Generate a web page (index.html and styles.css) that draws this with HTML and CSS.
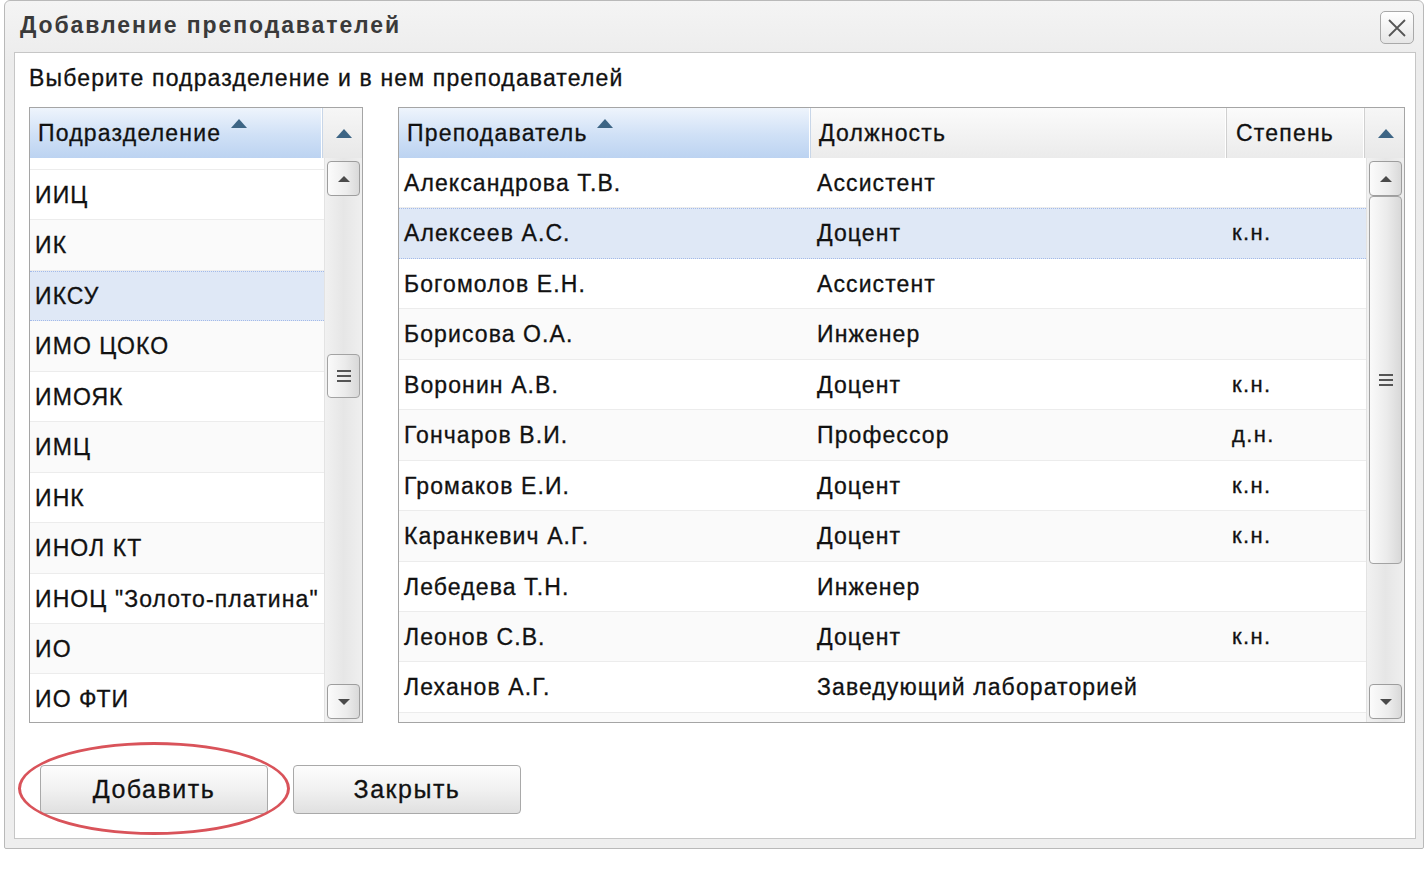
FILE: index.html
```html
<!DOCTYPE html>
<html lang="ru">
<head>
<meta charset="utf-8">
<title>Добавление преподавателей</title>
<link rel="stylesheet" href="styles.css">
</head>
<body>
<div class="page">
  <div class="window">
    <div class="titlebar">
      <span class="title">Добавление преподавателей</span>
      <button class="close" type="button" aria-label="Закрыть">
        <svg width="22" height="22" viewBox="0 0 22 22"><path d="M3 3 L19 19 M19 3 L3 19" stroke="#555" stroke-width="1.8" fill="none"/></svg>
      </button>
    </div>
    <div class="content">
      <div class="prompt">Выберите подразделение и в нем преподавателей</div>
      <div class="grids">
        <div class="grid grid-left">
          <div class="ghead">
            <div class="hcell sorted col-dept">Подразделение <span class="sort-arrow"></span></div>
            <div class="hscroll"><span class="hs-arrow"></span></div>
          </div>
          <div class="gbody">
            <div class="rows">
              <div class="row partial"></div>
              <div class="row"><div class="cell col-dept">ИИЦ</div></div>
              <div class="row alt"><div class="cell col-dept">ИК</div></div>
              <div class="row selected"><div class="cell col-dept">ИКСУ</div></div>
              <div class="row alt"><div class="cell col-dept">ИМО ЦОКО</div></div>
              <div class="row"><div class="cell col-dept">ИМОЯК</div></div>
              <div class="row alt"><div class="cell col-dept">ИМЦ</div></div>
              <div class="row"><div class="cell col-dept">ИНК</div></div>
              <div class="row alt"><div class="cell col-dept">ИНОЛ КТ</div></div>
              <div class="row"><div class="cell col-dept">ИНОЦ "Золото-платина"</div></div>
              <div class="row alt"><div class="cell col-dept">ИО</div></div>
              <div class="row"><div class="cell col-dept">ИО ФТИ</div></div>
            </div>
            <div class="vscroll">
              <div class="sbtn up"><span class="tri-up"></span></div>
              <div class="thumb thumb-left"><span class="grip"></span></div>
              <div class="sbtn down"><span class="tri-down"></span></div>
            </div>
          </div>
        </div>
        <div class="grid grid-right">
          <div class="ghead">
            <div class="hcell sorted col-name">Преподаватель <span class="sort-arrow"></span></div>
            <div class="hcell col-pos">Должность</div>
            <div class="hcell col-deg">Степень</div>
            <div class="hscroll"><span class="hs-arrow"></span></div>
          </div>
          <div class="gbody">
            <div class="rows">
              <div class="row"><div class="cell col-name">Александрова Т.В.</div><div class="cell col-pos">Ассистент</div><div class="cell col-deg"></div></div>
              <div class="row selected"><div class="cell col-name">Алексеев А.С.</div><div class="cell col-pos">Доцент</div><div class="cell col-deg">к.н.</div></div>
              <div class="row"><div class="cell col-name">Богомолов Е.Н.</div><div class="cell col-pos">Ассистент</div><div class="cell col-deg"></div></div>
              <div class="row alt"><div class="cell col-name">Борисова О.А.</div><div class="cell col-pos">Инженер</div><div class="cell col-deg"></div></div>
              <div class="row"><div class="cell col-name">Воронин А.В.</div><div class="cell col-pos">Доцент</div><div class="cell col-deg">к.н.</div></div>
              <div class="row alt"><div class="cell col-name">Гончаров В.И.</div><div class="cell col-pos">Профессор</div><div class="cell col-deg">д.н.</div></div>
              <div class="row"><div class="cell col-name">Громаков Е.И.</div><div class="cell col-pos">Доцент</div><div class="cell col-deg">к.н.</div></div>
              <div class="row alt"><div class="cell col-name">Каранкевич А.Г.</div><div class="cell col-pos">Доцент</div><div class="cell col-deg">к.н.</div></div>
              <div class="row"><div class="cell col-name">Лебедева Т.Н.</div><div class="cell col-pos">Инженер</div><div class="cell col-deg"></div></div>
              <div class="row alt"><div class="cell col-name">Леонов С.В.</div><div class="cell col-pos">Доцент</div><div class="cell col-deg">к.н.</div></div>
              <div class="row"><div class="cell col-name">Леханов А.Г.</div><div class="cell col-pos">Заведующий лабораторией</div><div class="cell col-deg"></div></div>
              <div class="row alt"></div>
            </div>
            <div class="vscroll">
              <div class="sbtn up"><span class="tri-up"></span></div>
              <div class="thumb thumb-right"><span class="grip"></span></div>
              <div class="sbtn down"><span class="tri-down"></span></div>
            </div>
          </div>
        </div>
      </div>
      <div class="buttons">
        <div class="btn-wrap">
          <button class="btn" type="button">Добавить</button>
          <span class="highlight"></span>
        </div>
        <button class="btn" type="button">Закрыть</button>
      </div>
    </div>
  </div>
</div>
</body>
</html>
```

FILE: styles.css
```css
html, body {
  margin: 0;
  padding: 0;
  background: #ffffff;
}

.page {
  padding-left: 4px;
  font-family: "Liberation Sans", Arial, sans-serif;
  color: #111;
}

.window {
  width: 1420px;
  height: 849px;
  box-sizing: border-box;
  border: 1px solid #b9b9b9;
  border-radius: 6px 6px 2px 2px;
  background: linear-gradient(#f4f4f4, #ececec 60px, #eeeeee);
  display: flex;
  flex-direction: column;
}

.titlebar {
  height: 51px;
  display: flex;
  align-items: center;
  padding-left: 15px;
  padding-right: 9px;
  flex: none;
}

.title {
  font-weight: bold;
  font-size: 23px;
  letter-spacing: 1.9px;
  color: #3a3a3a;
  position: relative;
  top: -1px;
}

.close {
  margin-left: auto;
  width: 34px;
  height: 33px;
  padding: 0;
  border: 1px solid #a9a9a9;
  border-radius: 5px;
  background: linear-gradient(#ffffff, #e6e6e6);
  display: flex;
  align-items: center;
  justify-content: center;
  position: relative;
  top: 1px;
}

.content {
  margin: 0 7px 0 9px;
  height: 787px;
  box-sizing: border-box;
  border: 1px solid #c6c6c6;
  background: #ffffff;
  padding: 12px 0 0 14px;
  display: flex;
  flex-direction: column;
  flex: none;
}

.prompt {
  font-size: 23px;
  line-height: 26px;
  letter-spacing: 1.15px;
  color: #111;
  -webkit-text-stroke: 0.3px #111;
}

.grids {
  margin-top: 16px;
  display: flex;
  gap: 35px;
}

.grid {
  height: 616px;
  box-sizing: border-box;
  border: 1px solid #a5a5a5;
  display: flex;
  flex-direction: column;
  background: #fff;
}

.grid-left { width: 334px; }
.grid-right { width: 1007px; }

.ghead {
  height: 50px;
  display: flex;
  flex: none;
  background: linear-gradient(#f9f9f9, #e9e9e9);
}

.hcell {
  box-sizing: border-box;
  height: 50px;
  font-size: 23px;
  line-height: 50px;
  letter-spacing: 1.2px;
  padding-left: 8px;
  white-space: nowrap;
  border-right: 1px solid #d0d0d0;
  box-shadow: inset -1px 0 0 #fff;
  background: linear-gradient(#fbfbfb, #ebebeb);
  color: #111;
  -webkit-text-stroke: 0.3px #111;
}

.hcell.sorted {
  background: linear-gradient(#eef4fc, #cfe0f6 55%, #bcd3f1);
  border-right: 1px solid #c8d6e8;
}

.sort-arrow {
  display: inline-block;
  width: 0;
  height: 0;
  border-left: 8px solid transparent;
  border-right: 8px solid transparent;
  border-bottom: 9px solid #3d6585;
  vertical-align: top;
  margin-top: 11px;
  margin-left: 2px;
}

.hscroll {
  flex: 1;
  display: flex;
  align-items: center;
  justify-content: center;
  background: linear-gradient(#f6f6f6, #e8e8e8);
}

.hs-arrow {
  width: 0;
  height: 0;
  border-left: 8px solid transparent;
  border-right: 8px solid transparent;
  border-bottom: 9px solid #3d6585;
  margin-left: 2px;
}

.grid-left .col-dept { width: 293px; flex: none; }
.grid-right .col-name { width: 412px; flex: none; }
.grid-right .col-pos { width: 416px; flex: none; }
.grid-right .col-deg { width: 138px; flex: none; }

.grid-right .hcell.col-deg { padding-left: 9px; }

.gbody {
  flex: 1;
  display: flex;
  overflow: hidden;
}

.rows {
  flex: 1;
  overflow: hidden;
}

.row {
  display: flex;
  height: 50.45px;
  box-sizing: border-box;
  border-top: 1px solid transparent;
  border-bottom: 1px solid #ececec;
  background: #fff;
}

.row.alt {
  background: #fafafa;
}

.row.partial {
  height: 12px;
}

.row.selected {
  background: #dfe8f6;
  border-top: 1px dotted #a3bae9;
  border-bottom: 1px dotted #a3bae9;
}

.cell {
  box-sizing: border-box;
  font-size: 23px;
  line-height: 48px;
  letter-spacing: 1.1px;
  padding-left: 5px;
  white-space: nowrap;
  overflow: hidden;
  color: #111;
  -webkit-text-stroke: 0.3px #111;
}

.grid-right .cell.col-pos { padding-left: 6px; }
.grid-right .cell.col-deg { padding-left: 5px; font-size: 22px; letter-spacing: 1.4px; }

.vscroll {
  width: 38px;
  flex: none;
  box-sizing: border-box;
  border-left: 1px solid #e3e3e3;
  background: linear-gradient(90deg, #f1f1f1, #e6e6e6 50%, #efefef);
  display: flex;
  flex-direction: column;
  align-items: center;
  padding: 3px 0 3px;
}

.sbtn {
  width: 33px;
  height: 35px;
  box-sizing: border-box;
  border: 1px solid #9d9d9d;
  border-radius: 4px;
  background: linear-gradient(90deg, #fbfbfb, #ececec 60%, #d9d9d9);
  display: flex;
  align-items: center;
  justify-content: center;
  flex: none;
}

.sbtn.down {
  margin-top: auto;
}

.tri-up {
  width: 0;
  height: 0;
  border-left: 6px solid transparent;
  border-right: 6px solid transparent;
  border-bottom: 6px solid #4a4a4a;
}

.tri-down {
  width: 0;
  height: 0;
  border-left: 6px solid transparent;
  border-right: 6px solid transparent;
  border-top: 6px solid #4a4a4a;
}

.thumb {
  width: 33px;
  box-sizing: border-box;
  border: 1px solid #a3a3a3;
  border-radius: 4px;
  background: linear-gradient(90deg, #fafafa, #ebebeb 55%, #d8d8d8);
  display: flex;
  align-items: center;
  justify-content: center;
  flex: none;
}

.thumb-left {
  margin-top: 158px;
  height: 44px;
}

.thumb-right {
  margin-top: 0;
  height: 368px;
}

.grip {
  width: 14px;
  height: 12px;
  background: repeating-linear-gradient(#555 0 2px, transparent 2px 5px);
}

.buttons {
  margin-top: 42px;
  margin-left: 11px;
  display: flex;
  gap: 25px;
}

.btn-wrap {
  position: relative;
  display: flex;
}

.btn {
  width: 228px;
  height: 49px;
  box-sizing: border-box;
  border: 1px solid #a9a9a9;
  border-radius: 4px;
  background: linear-gradient(#fdfdfd, #f1f1f1 50%, #e0e0e0);
  font-family: "Liberation Sans", Arial, sans-serif;
  font-size: 25px;
  letter-spacing: 1.5px;
  color: #111;
  padding: 0;
  -webkit-text-stroke: 0.3px #111;
}

.highlight {
  position: absolute;
  left: -22px;
  top: -23px;
  width: 272px;
  height: 93px;
  box-sizing: border-box;
  border: 3px solid #d9535a;
  border-radius: 50%;
  pointer-events: none;
}
```
